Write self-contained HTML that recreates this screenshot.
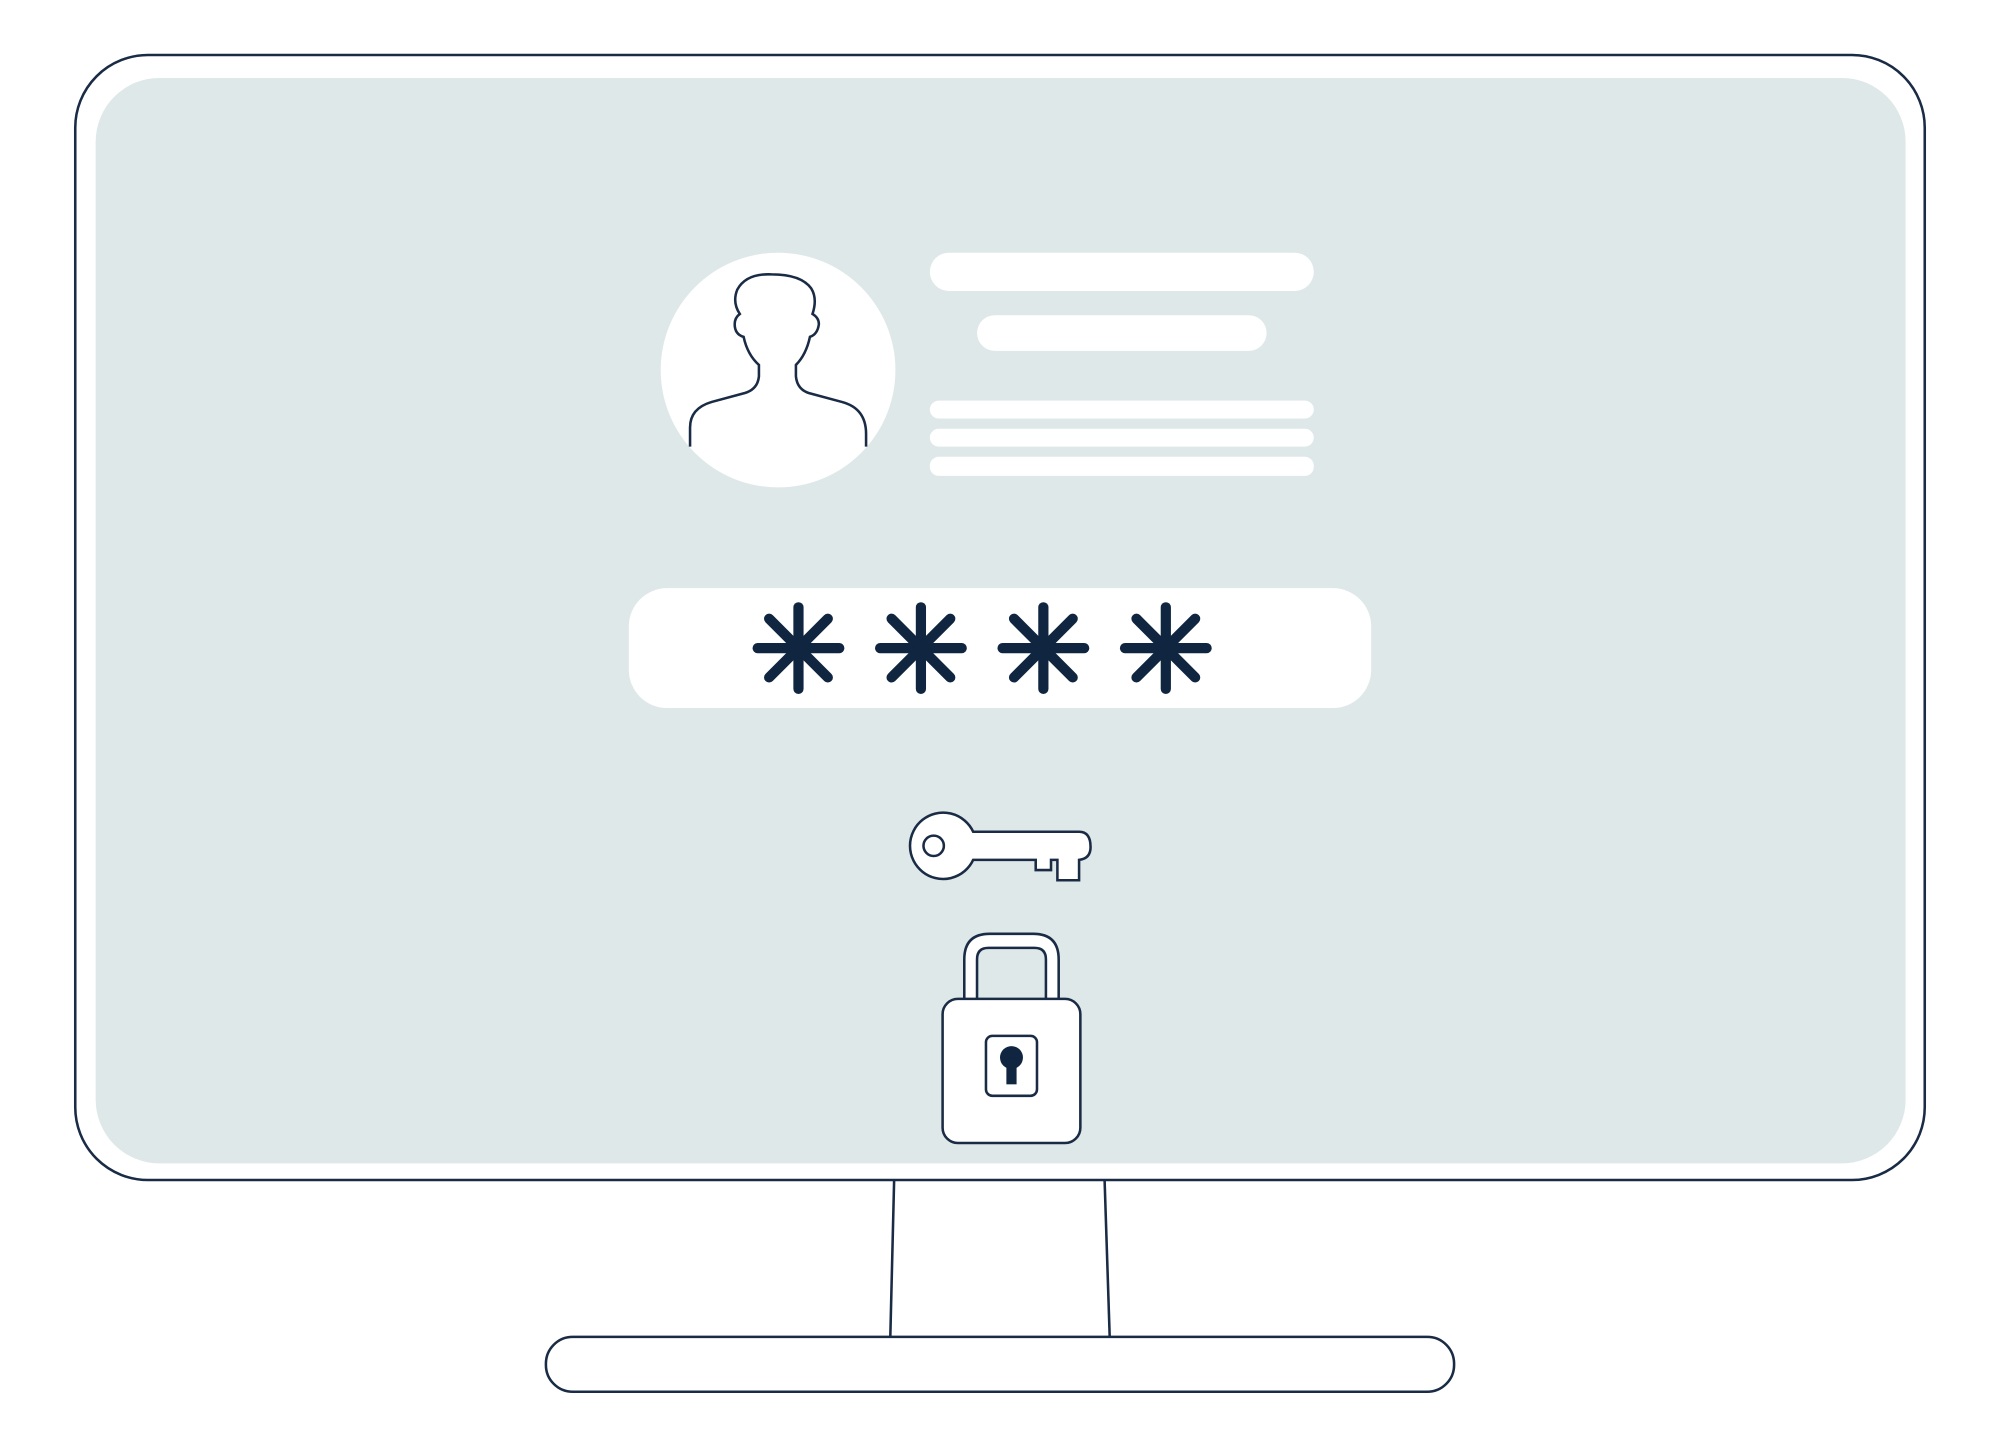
<!DOCTYPE html>
<html><head><meta charset="utf-8"><style>
html,body{margin:0;padding:0;background:#fff;width:2000px;height:1448px;overflow:hidden}
svg{display:block}
</style></head><body>
<svg width="2000" height="1448" viewBox="0 0 1568 1135" xmlns="http://www.w3.org/2000/svg">
<g fill="none" stroke="#1a2b45" stroke-width="2">
<rect x="59" y="43" width="1450" height="882" rx="57" fill="#fff"/>
</g>
<rect x="75" y="61" width="1419" height="851" rx="50" fill="#dfe8e9"/>
<g stroke="#1a2b45" stroke-width="2" fill="none">
<line x1="701" y1="925" x2="698" y2="1048"/>
<line x1="866" y1="925" x2="870" y2="1048"/>
<rect x="428" y="1048" width="712" height="43" rx="21" fill="#fff"/>
</g>
<!-- avatar -->
<circle cx="610" cy="290" r="92" fill="#fff"/>
<path d="M541 350 V335 Q541 320 558 315 L584 308 Q594 305 595 295 V286 Q586 278 583 264 Q576 262 576 254 Q576 249 580 246 Q574 237 578 227 Q585 214 605 215 Q628 215 636 226 Q641 234 637 246 Q642 249 642 254 Q641 262 635 264 Q632 278 624 286 V295 Q625 305 634 308 L660 315 Q679 320 679 340 V350" fill="#fff" stroke="#1a2b45" stroke-width="2"/>
<g fill="#fff">
<rect x="729" y="198" width="301" height="30" rx="15"/>
<rect x="766" y="247" width="227" height="28" rx="14"/>
<rect x="729" y="314" width="301" height="14" rx="7"/>
<rect x="729" y="336" width="301" height="14" rx="7"/>
<rect x="729" y="358" width="301" height="15" rx="7"/>
<rect x="493" y="461" width="582" height="94" rx="30"/>
</g>
<g stroke="#0f2540" stroke-width="8" stroke-linecap="round">
<g id="a" transform="translate(626,508)"><line x1="0" y1="-32" x2="0" y2="32"/><line x1="-32" y1="0" x2="32" y2="0"/><line x1="-23" y1="-23" x2="23" y2="23"/><line x1="-23" y1="23" x2="23" y2="-23"/></g>
<use href="#a" x="96"/><use href="#a" x="192"/><use href="#a" x="288"/>
</g>
<!-- key -->
<path d="M763 652 A26 26 0 1 0 763 674 H812 V682 H824 V674 H829 V690 H846 V674 Q855 673 855 664 Q855 652 846 652 Z" fill="#fff" stroke="#1a2b45" stroke-width="2"/>
<circle cx="732" cy="663" r="8" fill="#fff" stroke="#1a2b45" stroke-width="2"/>
<!-- lock -->
<g stroke="#1a2b45" stroke-width="2" fill="#fff">
<path d="M756 784 V752 Q756 732 776 732 H810 Q830 732 830 752 V784 H820 V752 Q820 743 811 743 H775 Q766 743 766 752 V784 Z"/>
<rect x="739" y="783" width="108" height="113" rx="12"/>
<rect x="773" y="812" width="40" height="47" rx="5"/>
</g>
<circle cx="793" cy="829" r="9" fill="#0f2540"/>
<rect x="789" y="830" width="8" height="20" fill="#0f2540"/>
</svg>
</body></html>
